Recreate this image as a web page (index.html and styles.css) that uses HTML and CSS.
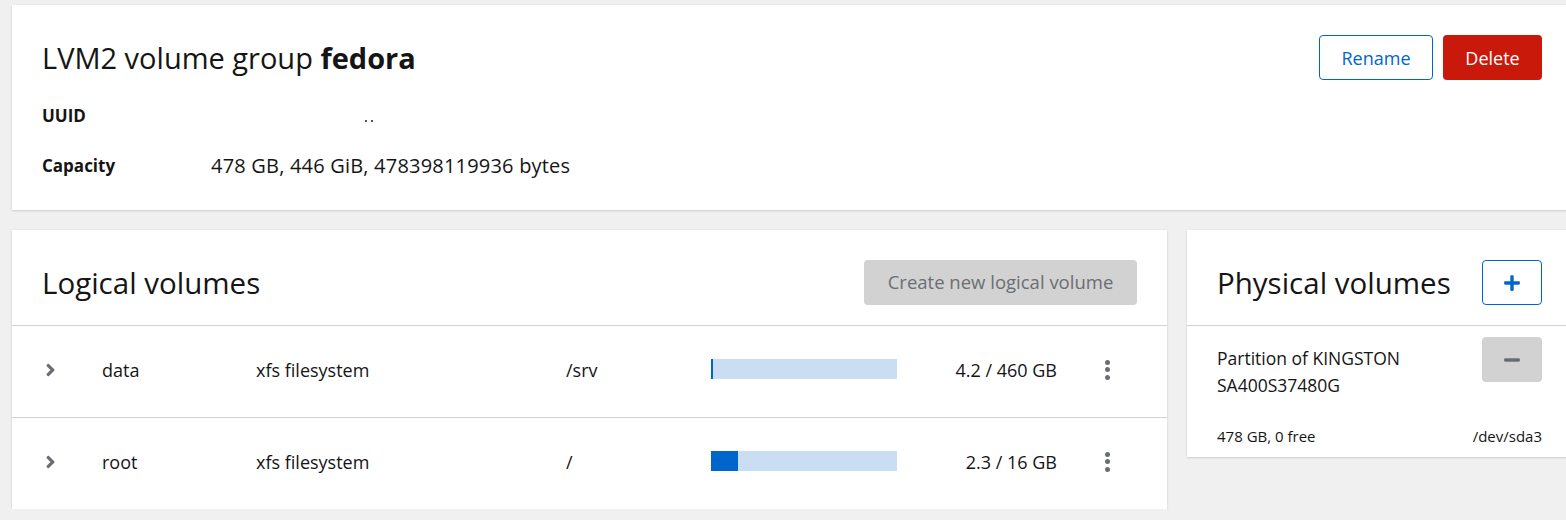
FILE: index.html
```html
<!DOCTYPE html>
<html lang="en">
<head>
<meta charset="utf-8">
<title>LVM2 volume group fedora</title>
<link rel="stylesheet" href="styles.css">
</head>
<body>
<div class="page">
  <section class="card vg-card">
    <div class="card-header">
      <h1 class="title">LVM2 volume group <b>fedora</b></h1>
      <div class="actions">
        <button class="btn btn-secondary">Rename</button>
        <button class="btn btn-danger">Delete</button>
      </div>
    </div>
    <dl class="details">
      <dt>UUID</dt>
      <dd class="uuid"><span class="clipped"><i></i><i></i></span></dd>
      <dt>Capacity</dt>
      <dd class="capacity">478 GB, 446 GiB, 478398119936 bytes</dd>
    </dl>
  </section>

  <div class="columns">
    <section class="card lv-card">
      <div class="card-header bordered">
        <h2 class="title">Logical volumes</h2>
        <button class="btn btn-disabled">Create new logical volume</button>
      </div>
      <div class="lv-row">
        <span class="chev"><svg viewBox="0 0 256 512" width="11" height="20"><path d="M224.3 273l-136 136c-9.4 9.4-24.6 9.4-33.9 0l-22.6-22.6c-9.4-9.4-9.4-24.6 0-33.9l96.4-96.4-96.4-96.4c-9.4-9.4-9.4-24.6 0-33.9L54.3 103c9.4-9.4 24.6-9.4 33.9 0l136 136c9.5 9.4 9.5 24.6.1 34z"/></svg></span>
        <span>data</span>
        <span>xfs filesystem</span>
        <span>/srv</span>
        <span class="bar"><span class="fill" style="width:0.9%"></span></span>
        <span class="size">4.2 / 460 GB</span>
        <span class="kebab"><i></i><i></i><i></i></span>
      </div>
      <div class="lv-row">
        <span class="chev"><svg viewBox="0 0 256 512" width="11" height="20"><path d="M224.3 273l-136 136c-9.4 9.4-24.6 9.4-33.9 0l-22.6-22.6c-9.4-9.4-9.4-24.6 0-33.9l96.4-96.4-96.4-96.4c-9.4-9.4-9.4-24.6 0-33.9L54.3 103c9.4-9.4 24.6-9.4 33.9 0l136 136c9.5 9.4 9.5 24.6.1 34z"/></svg></span>
        <span>root</span>
        <span>xfs filesystem</span>
        <span>/</span>
        <span class="bar"><span class="fill" style="width:14.4%"></span></span>
        <span class="size">2.3 / 16 GB</span>
        <span class="kebab"><i></i><i></i><i></i></span>
      </div>
    </section>

    <section class="card pv-card">
      <div class="card-header bordered">
        <h2 class="title">Physical volumes</h2>
        <button class="btn btn-secondary btn-icon"><svg viewBox="0 0 448 512" width="16" height="18"><path d="M416 208H272V64c0-17.67-14.33-32-32-32h-32c-17.67 0-32 14.33-32 32v144H32c-17.67 0-32 14.33-32 32v32c0 17.67 14.33 32 32 32h144v144c0 17.67 14.33 32 32 32h32c17.67 0 32-14.33 32-32V304h144c17.67 0 32-14.33 32-32v-32c0-17.67-14.33-32-32-32z"/></svg></button>
      </div>
      <div class="pv-body">
        <div class="pv-item">
          <div class="pv-name">Partition of KINGSTON<br>SA400S37480G</div>
          <button class="btn btn-disabled btn-icon"><svg viewBox="0 0 448 512" width="16" height="18"><path d="M416 208H32c-17.67 0-32 14.33-32 32v32c0 17.67 14.33 32 32 32h384c17.67 0 32-14.33 32-32v-32c0-17.67-14.33-32-32-32z"/></svg></button>
        </div>
        <div class="pv-foot">
          <span>478 GB, 0 free</span>
          <span>/dev/sda3</span>
        </div>
      </div>
    </section>
  </div>
</div>
</body>
</html>
```

FILE: styles.css
```css
* { box-sizing: border-box; }
html, body { margin: 0; padding: 0; }
body {
  background: #f0f0f0;
  font-family: "Open Sans", "Liberation Sans", sans-serif;
  font-size: 18px;
  color: #151515;
  overflow: hidden;
}
.page {
  width: 1572px;
  padding: 5px 0 0 12px;
  display: flex;
  flex-direction: column;
  gap: 20px;
}
.card {
  background: #fff;
  box-shadow: 0 1px 2px 0 rgba(3,3,3,.12), 0 0 2px 0 rgba(3,3,3,.06);
}
.vg-card { padding: 30px 30px 32px 30px; }
.card-header {
  display: flex;
  align-items: center;
  justify-content: space-between;
  height: 45px;
}
.card-header.bordered {
  height: 96px;
  padding: 30px 30px 20px 30px;
  border-bottom: 1px solid #d2d2d2;
}
.title {
  margin: 0;
  font-size: 29.5px;
  font-weight: 400;
  line-height: 45px;
  white-space: nowrap;
}
.title b { font-weight: 700; }
.vg-card .title { font-size: 29px; }
.actions { display: flex; gap: 10px; }
.btn {
  font-family: inherit;
  font-size: 18px;
  height: 45px;
  line-height: 1;
  border-radius: 4px;
  padding: 0 20px;
  border: 1px solid transparent;
  background: none;
  cursor: pointer;
}
.btn-secondary {
  color: #0066cc;
  border-color: #0066cc;
  background: #fff;
  width: 114px;
}
.btn-danger {
  color: #fff;
  background: #c9190b;
  width: 99px;
}
.btn-disabled {
  background: #d2d2d2;
  color: #6a6e73;
  width: 273px;
  font-size: 18.5px;
}
.btn-icon {
  width: 60px;
  padding: 0;
  display: flex;
  align-items: center;
  justify-content: center;
}
.btn-secondary.btn-icon svg { fill: #0066cc; }
.btn-disabled.btn-icon svg { fill: #6a6e73; }

.details {
  margin: 24px 0 0 0;
  display: grid;
  grid-template-columns: 169px 1fr;
  row-gap: 26px;
  line-height: 24px;
}
.details dt { font-weight: 700; font-size: 17px; }
.details dd { margin: 0; }
.capacity { font-size: 20px; letter-spacing: 0.2px; }
.uuid { padding-left: 154px; }
.clipped { display: flex; gap: 4px; padding-top: 16px; }
.clipped i { display: block; width: 2px; height: 2px; background: #555; }

.columns {
  display: grid;
  grid-template-columns: 1155px 385px;
  gap: 20px;
  align-items: start;
}
.lv-row {
  display: grid;
  grid-template-columns: 60px 154px 310px 145px 186px 160px 80px;
  align-items: center;
  height: 92px;
  padding: 0 30px 4px 30px;
  border-bottom: 1px solid #d2d2d2;
}
.lv-row:last-child { border-bottom: none; height: 91px; }
.chev { display: flex; align-items: center; padding-left: 3px; }
.chev svg { fill: #6a6e73; }
.bar {
  display: block;
  height: 20px;
  margin-bottom: 1px;
  background: #c9ddf3;
}
.fill {
  display: block;
  height: 100%;
  background: #0066cc;
  min-width: 2px;
}
.size { text-align: right; }
.kebab {
  display: flex;
  flex-direction: column;
  align-items: center;
  gap: 2.5px;
  justify-self: end;
  width: 60px;
}
.kebab i {
  display: block;
  width: 5px;
  height: 5px;
  border-radius: 50%;
  background: #6a6e73;
}
.pv-body { padding: 11px 30px 10px 30px; }
.pv-item {
  display: flex;
  justify-content: space-between;
  align-items: flex-start;
}
.pv-name {
  margin-top: 8px;
  line-height: 27px;
  font-size: 17.5px;
}
.pv-foot {
  display: flex;
  justify-content: space-between;
  margin-top: 27px;
  font-size: 15px;
  line-height: 21px;
}
```
